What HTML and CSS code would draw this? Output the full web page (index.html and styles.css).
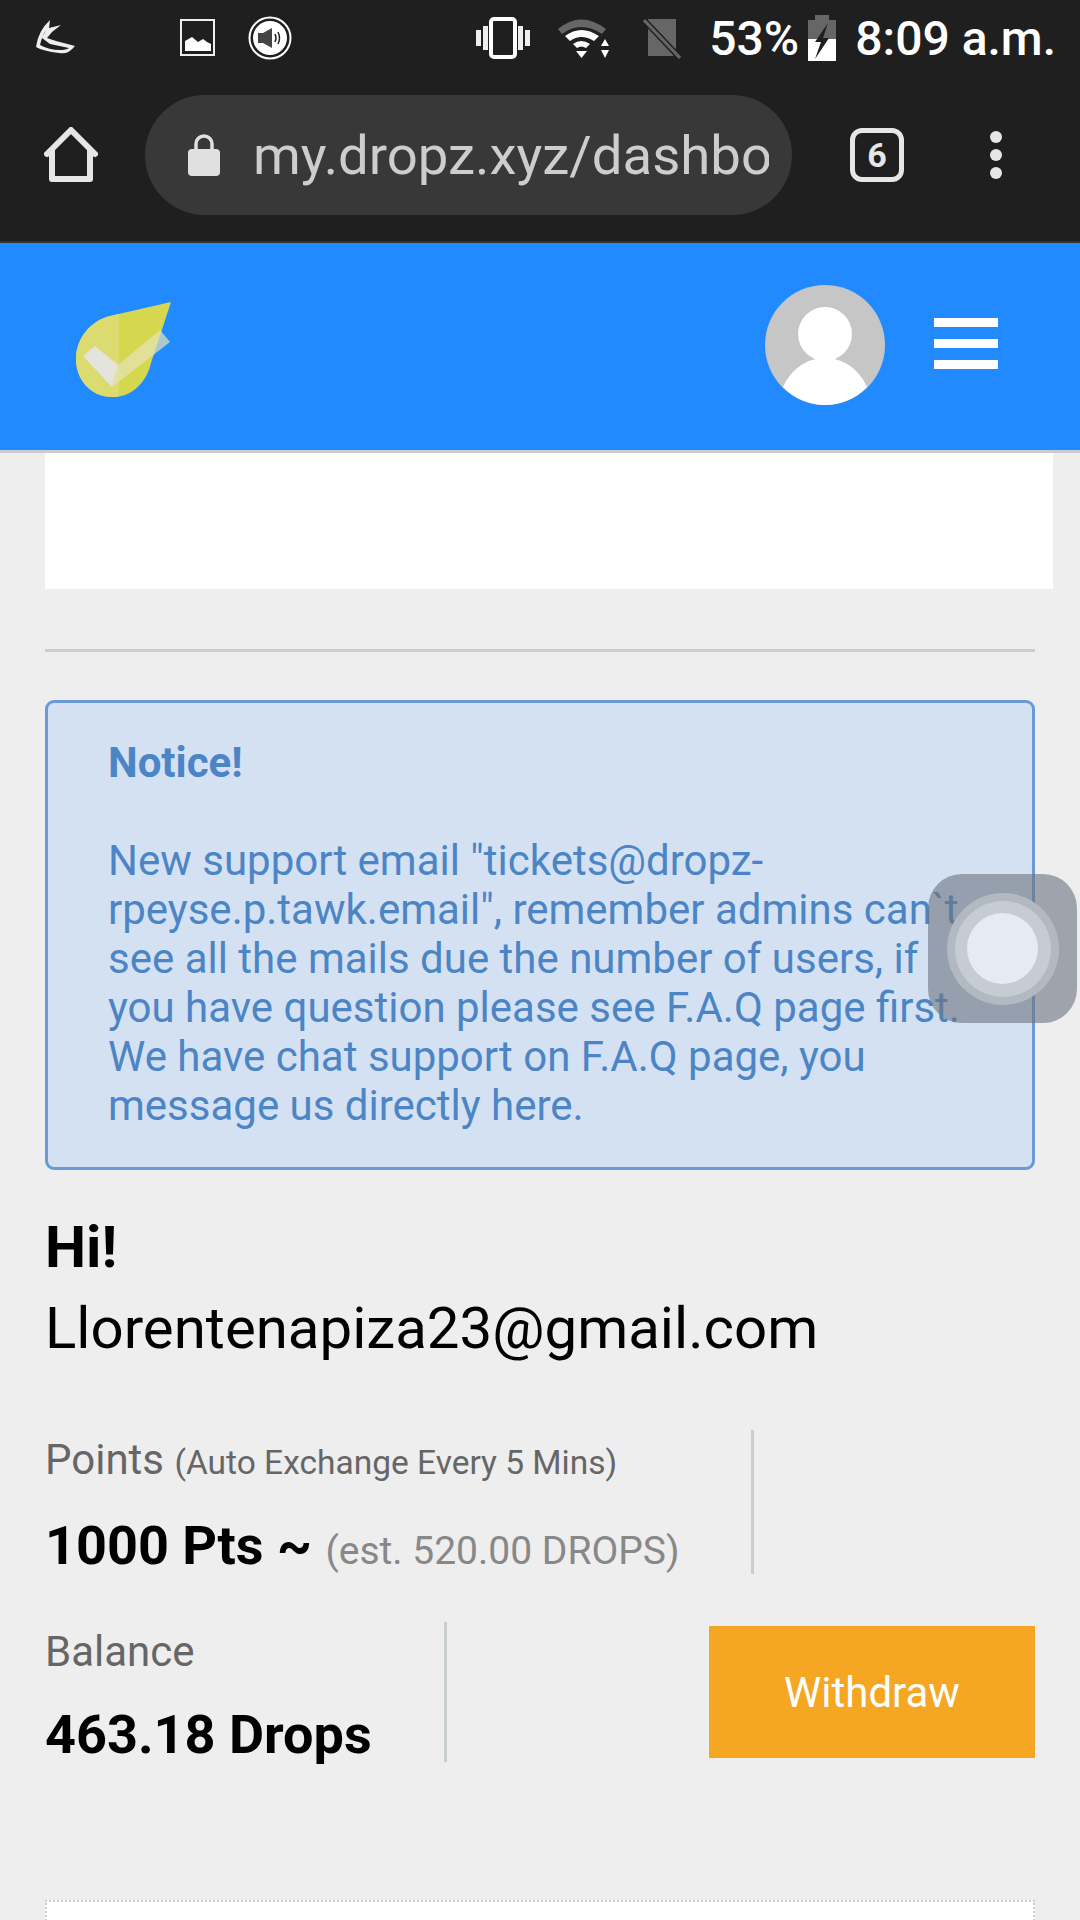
FILE: index.html
```html
<!DOCTYPE html>
<html lang="en">
<head>
    <meta charset="UTF-8">
    <meta name="viewport" content="width=device-width, initial-scale=1.0">
    <title>Dashboard</title>
    <link rel="stylesheet" href="styles.css">
</head>
<body>
    <div class="screen">
        <!-- Android status bar -->
        <div class="status-bar">
            <div class="status-left">
                <svg class="icon-bird" width="42" height="40" viewBox="0 0 42 40">
                    <path d="M15 2 L14 10 L26 7 L17 14 L12 20 L21 23 L40 28 Q33 37 24 35 Q8 33 1 29 Q3 13 15 2 Z M13 10 Q7 17 5 27 Q14 32 25 32 Q31 32 34 30 L15 26 L7 20 Q9 14 13 10 Z" fill="#eee" fill-rule="evenodd"/>
                </svg>
                <svg class="icon-picture" width="36" height="38" viewBox="0 0 36 38">
                    <rect x="1" y="1" width="33" height="35" fill="none" stroke="#eee" stroke-width="2"/>
                    <path d="M5 32 V22 L12 18 L18 23 L23 20 L27 23 L31 25 V32 Z" fill="#fff"/>
                </svg>
                <svg class="icon-sound" width="44" height="44" viewBox="0 0 44 44">
                    <circle cx="22" cy="22" r="20.500" fill="none" stroke="#fff" stroke-width="2"/>
                    <circle cx="22" cy="22" r="17" fill="#fff"/>
                    <path d="M10 17 H15 L24 12 V32 L15 27 H10 Z" fill="#444"/>
                    <path d="M27 18 Q29 22 27 26 M30 16 Q33 22 30 28" fill="none" stroke="#222" stroke-width="1.500"/>
                </svg>
            </div>
            <div class="status-right">
                <svg class="icon-vibrate" width="54" height="42" viewBox="0 0 54 42">
                    <rect x="15" y="2" width="24" height="38" rx="3" fill="none" stroke="#fff" stroke-width="4"/>
                    <rect x="0" y="13" width="5" height="16" fill="#eee"/>
                    <rect x="7" y="9" width="5" height="24" fill="#eee"/>
                    <rect x="42" y="9" width="5" height="24" fill="#eee"/>
                    <rect x="49" y="13" width="5" height="16" fill="#eee"/>
                </svg>
                <svg class="icon-wifi" width="52" height="44" viewBox="0 0 52 44">
                    <path d="M1 13 Q24 -6 49 13 L45 18 Q24 4 5 18 Z" fill="#666"/>
                    <path d="M8 20 Q24 8 42 20 L37 25 Q24 17 13 25 Z" fill="#fff"/>
                    <path d="M16 28 Q24 22 33 28 L29 32 Q24 29 20 32 Z" fill="#fff"/>
                    <path d="M19 35 H30 L24.500 42 Z" fill="#fff"/>
                    <path d="M48 23 L52 30 H44 Z M44 34 H52 L48 42 Z" fill="#fff"/>
                </svg>
                <svg class="icon-sim" width="38" height="42" viewBox="0 0 38 42">
                    <path d="M5 2 H33 V39 H5 Z" fill="#666"/>
                    <path d="M1 3 L37 41" stroke="#1f1f1f" stroke-width="6"/>
                    <path d="M1 3 L37 41" stroke="#666" stroke-width="3"/>
                </svg>
                <span class="battery-text">53%</span>
                <svg class="icon-battery" width="28" height="46" viewBox="0 0 28 46">
                    <rect x="0" y="5" width="28" height="41" fill="#666"/>
                    <rect x="7" y="0" width="14" height="5" fill="#666"/>
                    <rect x="0" y="24" width="28" height="22" fill="#fff"/>
                    <path d="M20 8 L7 27 H13 L7 44 L21 23 H15 L20 8 Z" fill="#1f1f1f"/>
                </svg>
                <span class="clock">8:09 a.m.</span>
            </div>
        </div>

        <!-- Browser toolbar -->
        <div class="toolbar">
            <svg class="icon-home" width="54" height="56" viewBox="0 0 54 56">
                <path d="M3 27 L27 3 L51 27 M8 23 V52 H46 V23" fill="none" stroke="#e6e6e6" stroke-width="6" stroke-linejoin="round" stroke-linecap="round"/>
            </svg>
            <div class="url-pill">
                <svg class="icon-lock" width="32" height="42" viewBox="0 0 32 42">
                    <path d="M8 16 V10 a8 8 0 0 1 16 0 V16" fill="none" stroke="#e0e0e0" stroke-width="3.500"/>
                    <rect x="0" y="15" width="32" height="27" rx="4" fill="#e0e0e0"/>
                </svg>
                <span class="url-text">my.dropz.xyz/dashbo</span>
            </div>
            <div class="tab-count">6</div>
            <div class="menu-dots"><i></i><i></i><i></i></div>
        </div>

        <!-- Site header -->
        <header class="site-header">
            <svg class="logo" width="100" height="98" viewBox="0 0 100 98">
                <clipPath id="drop-left"><rect x="0" y="0" width="44" height="98"/></clipPath>
                <path d="M96 1 L76 62 C72 80 58 96 38 96 C15 96 1 78 1 58 C1 38 15 20 35 15 Z" fill="#d5d74f"/>
                <path d="M96 1 L76 62 C72 80 58 96 38 96 C15 96 1 78 1 58 C1 38 15 20 35 15 Z" fill="#dcdb70" clip-path="url(#drop-left)"/>
                <path d="M43 64 L85 29 L95 41 L37 86 Z" fill="#e4e4b8" fill-opacity="0.7"/>
                <path d="M8 55 L20 45 L43 64 L37 86 Z" fill="#e4e4dc"/>
            </svg>
            <div class="header-right">
                <svg class="avatar" width="120" height="120" viewBox="0 0 120 120">
                    <circle cx="60" cy="60" r="60" fill="#c6c6c6"/>
                    <circle cx="60" cy="49" r="27" fill="#fff"/>
                    <path d="M18 102 C26 84 42 73 60 73 C78 73 94 84 102 102 A60 60 0 0 1 60 120 A60 60 0 0 1 18 102 Z" fill="#fff"/>
                </svg>
                <div class="hamburger"><i></i><i></i><i></i></div>
            </div>
        </header>

        <main class="content">
            <div class="ad-box"></div>
            <hr class="divider">

            <div class="notice">
                <strong>Notice!</strong>
                <p>New support email "tickets@dropz-rpeyse.p.tawk.email", remember admins can`t see all the mails due the number of users, if you have question please see F.A.Q page first. We have chat support on F.A.Q page, you message us directly here.</p>
            </div>

            <h2 class="greeting"><b>Hi!</b><br>Llorentenapiza23@gmail.com</h2>

            <div class="stat-row">
                <div class="stat stat-points">
                    <div class="stat-label">Points <small>(Auto Exchange Every 5 Mins)</small></div>
                    <div class="stat-value">1000 Pts ~ <span>(est. 520.00 DROPS)</span></div>
                </div>
            </div>
            <div class="stat-row balance-row">
                <div class="stat stat-balance">
                    <div class="stat-label">Balance</div>
                    <div class="stat-value">463.18 Drops</div>
                </div>
                <button class="withdraw-btn">Withdraw</button>
            </div>

            <div class="bottom-card"></div>
        </main>

        <!-- Floating assistive touch button -->
        <div class="assist-touch"><div class="assist-ring"><div class="assist-dot"></div></div></div>
    </div>
</body>
</html>
```

FILE: styles.css
```css
/* Base */
* {
    box-sizing: border-box;
}

body {
    margin: 0;
    font-family: Roboto, 'Liberation Sans', sans-serif;
    background: #eee;
}

.screen {
    position: relative;
    width: 1080px;
    height: 1920px;
    overflow: hidden;
}

/* Status bar */
.status-bar {
    height: 76px;
    background: #1f1f1f;
    display: flex;
    justify-content: space-between;
    align-items: center;
    padding: 0 24px 0 35px;
    color: #fff;
}

.status-left, .status-right {
    display: flex;
    align-items: center;
}

.icon-bird {
    margin-right: 103px;
}

.icon-picture {
    margin-right: 32px;
}

.icon-vibrate {
    margin-right: 27px;
}

.icon-wifi {
    margin-right: 34px;
}

.icon-sim {
    margin-right: 28px;
}

.battery-text, .clock {
    font-size: 48px;
    font-weight: 500;
}

.icon-battery {
    margin: 0 19px 0 9px;
}

/* Browser toolbar */
.toolbar {
    height: 167px;
    background: #1f1f1f;
    border-bottom: 2px solid #333;
    display: flex;
    align-items: center;
    padding: 0 0 8px 44px;
}

.url-pill {
    width: 647px;
    height: 120px;
    margin-left: 47px;
    padding-left: 43px;
    border-radius: 60px;
    background: #383838;
    display: flex;
    align-items: center;
}

.icon-lock {
    flex-shrink: 0;
    margin-right: 33px;
}

.url-text {
    font-size: 54.500px;
    color: #cdcdcd;
    white-space: nowrap;
    width: 516px;
    overflow: hidden;
}

.tab-count {
    width: 54px;
    height: 54px;
    margin-left: 58px;
    border: 5px solid #e6e6e6;
    border-radius: 12px;
    color: #e6e6e6;
    font-size: 34px;
    font-weight: 700;
    display: flex;
    justify-content: center;
    align-items: center;
}

.menu-dots {
    margin-left: 86px;
    display: flex;
    flex-direction: column;
    gap: 6px;
}

.menu-dots i {
    width: 12px;
    height: 12px;
    border-radius: 50%;
    background: #e6e6e6;
}

/* Site header */
.site-header {
    height: 210px;
    background: #228aff;
    border-bottom: 3px solid #c8ccd0;
    display: flex;
    justify-content: space-between;
    padding: 59px 82px 0 75px;
}

.logo {
    margin-top: -1px;
}

.header-right {
    display: flex;
    gap: 49px;
    margin-top: -17px;
    height: 120px;
    align-items: flex-start;
}

.hamburger {
    display: flex;
    flex-direction: column;
    gap: 12px;
    padding-top: 33px;
}

.hamburger i {
    display: block;
    width: 64px;
    height: 9px;
    background: #fff;
}

/* Page content */
.content {
    padding: 0 45px;
}

.ad-box {
    width: 1008px;
    height: 136px;
    background: #fff;
}

.divider {
    margin: 60px 0 48px;
    border: 0;
    border-top: 3px solid #ccc;
}

.notice {
    height: 470px;
    padding: 35px 60px 0;
    border: 3px solid #6a9bd6;
    border-radius: 9px;
    background: #d4e1f2;
    color: #4c85c5;
    font-size: 42px;
    line-height: 49px;
}

.notice strong {
    display: block;
    font-weight: 700;
}

.notice p {
    margin: 49px 0 0;
}

.greeting {
    margin: 37px 0 0;
    font-size: 58.200px;
    font-weight: 400;
    line-height: 81px;
    color: #000;
}

.stat-row {
    display: flex;
    justify-content: space-between;
    align-items: center;
}

.stat {
    height: 144px;
    border-right: 3px solid #c9cfd0;
    padding-top: 5px;
}

.stat-points {
    width: 709px;
    margin-top: 61px;
}

.balance-row {
    margin-top: 48px;
}

.stat-balance {
    width: 402px;
    height: 140px;
}

.stat-label {
    color: #666;
    font-size: 42px;
    line-height: 50px;
}

.stat-label small {
    font-size: 33.500px;
}

.stat-value {
    margin-top: 30px;
    font-size: 54px;
    font-weight: 700;
    line-height: 56px;
    color: #000;
}

.stat-value span {
    font-size: 39px;
    font-weight: 400;
    color: #888;
}

.withdraw-btn {
    width: 326px;
    height: 132px;
    border: 0;
    background: #f5a623;
    color: #fff;
    font-family: inherit;
    font-size: 42px;
}

.bottom-card {
    height: 100px;
    margin-top: 138px;
    background: #fff;
    border: 2px dotted #ccc;
}

/* Floating button over the page */
.assist-touch {
    position: absolute;
    left: 928px;
    top: 874px;
    width: 149px;
    height: 149px;
    border-radius: 34px;
    background: rgba(110, 118, 130, 0.62);
    display: flex;
    justify-content: center;
    align-items: center;
}

.assist-ring {
    width: 96px;
    height: 96px;
    border-radius: 50%;
    background: #c6ccd3;
    box-shadow: 0 0 0 8px #b3b9c1;
    display: flex;
    justify-content: center;
    align-items: center;
}

.assist-dot {
    width: 71px;
    height: 71px;
    border-radius: 50%;
    background: #e4ebf3;
}
```
